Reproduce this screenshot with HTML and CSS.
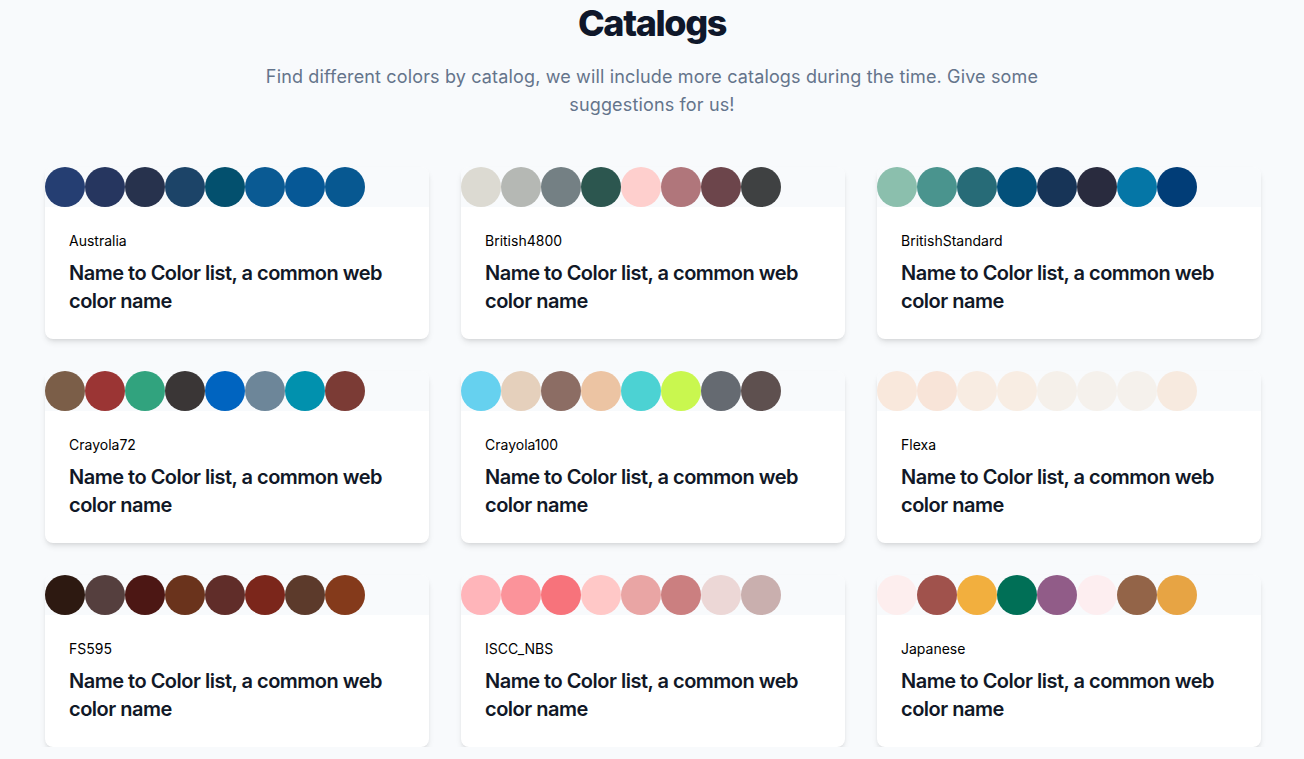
FILE: index.html
```html
<!DOCTYPE html>
<html lang="en">
<head>
<meta charset="utf-8">
<title>Catalogs</title>
<link rel="stylesheet" href="styles.css">
</head>
<body>
<main class="page">
  <header class="intro">
    <h1 class="title">Catalogs</h1>
    <p class="lead">Find different colors by catalog, we will include more catalogs during the time. Give some suggestions for us!</p>
  </header>
  <section class="grid">
    <article class="card">
      <div class="swatches">
        <span class="dot" style="background:#253e72"></span><span class="dot" style="background:#26365f"></span><span class="dot" style="background:#27324d"></span><span class="dot" style="background:#1c4468"></span><span class="dot" style="background:#03506e"></span><span class="dot" style="background:#0a5a93"></span><span class="dot" style="background:#065896"></span><span class="dot" style="background:#075891"></span>
      </div>
      <div class="body"><p class="name">Australia</p><h2 class="desc">Name to Color list, a common web color name</h2></div>
    </article>
    <article class="card">
      <div class="swatches">
        <span class="dot" style="background:#dcdad2"></span><span class="dot" style="background:#b5b8b4"></span><span class="dot" style="background:#748084"></span><span class="dot" style="background:#2c564f"></span><span class="dot" style="background:#fecfcd"></span><span class="dot" style="background:#b0767b"></span><span class="dot" style="background:#6c454b"></span><span class="dot" style="background:#3f4142"></span>
      </div>
      <div class="body"><p class="name">British4800</p><h2 class="desc">Name to Color list, a common web color name</h2></div>
    </article>
    <article class="card">
      <div class="swatches">
        <span class="dot" style="background:#8bbfad"></span><span class="dot" style="background:#4a948e"></span><span class="dot" style="background:#276b77"></span><span class="dot" style="background:#03507a"></span><span class="dot" style="background:#173457"></span><span class="dot" style="background:#292b3e"></span><span class="dot" style="background:#0576a6"></span><span class="dot" style="background:#013d77"></span>
      </div>
      <div class="body"><p class="name">BritishStandard</p><h2 class="desc">Name to Color list, a common web color name</h2></div>
    </article>
    <article class="card">
      <div class="swatches">
        <span class="dot" style="background:#7b5e48"></span><span class="dot" style="background:#9b3534"></span><span class="dot" style="background:#31a37e"></span><span class="dot" style="background:#3a3636"></span><span class="dot" style="background:#0064c0"></span><span class="dot" style="background:#6d8699"></span><span class="dot" style="background:#0191ae"></span><span class="dot" style="background:#7b3b35"></span>
      </div>
      <div class="body"><p class="name">Crayola72</p><h2 class="desc">Name to Color list, a common web color name</h2></div>
    </article>
    <article class="card">
      <div class="swatches">
        <span class="dot" style="background:#66d1ef"></span><span class="dot" style="background:#e5d0bc"></span><span class="dot" style="background:#8c6d64"></span><span class="dot" style="background:#ecc4a3"></span><span class="dot" style="background:#4cd2d3"></span><span class="dot" style="background:#c9f74f"></span><span class="dot" style="background:#656a71"></span><span class="dot" style="background:#5e504f"></span>
      </div>
      <div class="body"><p class="name">Crayola100</p><h2 class="desc">Name to Color list, a common web color name</h2></div>
    </article>
    <article class="card">
      <div class="swatches">
        <span class="dot" style="background:#f9e8dc"></span><span class="dot" style="background:#f8e4d8"></span><span class="dot" style="background:#f8ece2"></span><span class="dot" style="background:#f8ede3"></span><span class="dot" style="background:#f5f0ea"></span><span class="dot" style="background:#f5f1ec"></span><span class="dot" style="background:#f5f1ec"></span><span class="dot" style="background:#f7eadf"></span>
      </div>
      <div class="body"><p class="name">Flexa</p><h2 class="desc">Name to Color list, a common web color name</h2></div>
    </article>
    <article class="card">
      <div class="swatches">
        <span class="dot" style="background:#2d1911"></span><span class="dot" style="background:#553f3e"></span><span class="dot" style="background:#4c1714"></span><span class="dot" style="background:#6a331c"></span><span class="dot" style="background:#602d29"></span><span class="dot" style="background:#7b261b"></span><span class="dot" style="background:#5c3a2b"></span><span class="dot" style="background:#843a1b"></span>
      </div>
      <div class="body"><p class="name">FS595</p><h2 class="desc">Name to Color list, a common web color name</h2></div>
    </article>
    <article class="card">
      <div class="swatches">
        <span class="dot" style="background:#ffb5ba"></span><span class="dot" style="background:#fb939a"></span><span class="dot" style="background:#f7737b"></span><span class="dot" style="background:#ffc8c7"></span><span class="dot" style="background:#e9a5a4"></span><span class="dot" style="background:#cb7f80"></span><span class="dot" style="background:#ecd7d6"></span><span class="dot" style="background:#c9afae"></span>
      </div>
      <div class="body"><p class="name">ISCC_NBS</p><h2 class="desc">Name to Color list, a common web color name</h2></div>
    </article>
    <article class="card">
      <div class="swatches">
        <span class="dot" style="background:#fdeeee"></span><span class="dot" style="background:#a0524c"></span><span class="dot" style="background:#f2af3e"></span><span class="dot" style="background:#006f56"></span><span class="dot" style="background:#915c88"></span><span class="dot" style="background:#fdeef0"></span><span class="dot" style="background:#936448"></span><span class="dot" style="background:#e7a444"></span>
      </div>
      <div class="body"><p class="name">Japanese</p><h2 class="desc">Name to Color list, a common web color name</h2></div>
    </article>
  </section>
</main>
</body>
</html>
```

FILE: styles.css
```css
* { box-sizing: border-box; }
html, body { margin: 0; padding: 0; }
body {
  background: #f8fafc;
  font-family: Inter, "Noto Sans", "Liberation Sans", sans-serif;
  color: #111827;
}
.page {
  width: 1216px;
  margin: 0 auto;
  padding-top: 3px;
}
.intro {
  text-align: center;
}
.title {
  margin: 0;
  font-size: 36px;
  line-height: 40px;
  font-weight: 800;
  color: #0f172a;
  letter-spacing: -1.4px;
}
.lead {
  margin: 20px auto 0;
  max-width: 800px;
  font-size: 18px;
  line-height: 28px;
  color: #64748b;
  letter-spacing: 0.15px;
}
.grid {
  margin-top: 48px;
  display: grid;
  grid-template-columns: repeat(3, 384px);
  gap: 32px;
  padding-left: 1px;
}
.card {
  background: #ffffff;
  border-radius: 8px;
  box-shadow: 0 4px 6px -1px rgba(0,0,0,0.1), 0 2px 4px -2px rgba(0,0,0,0.1);
  overflow: hidden;
}
.swatches {
  display: flex;
  height: 40px;
  background: #f8fafc;
}
.dot {
  width: 40px;
  height: 40px;
  border-radius: 50%;
  flex: none;
}
.body {
  padding: 24px 24px 24px;
}
.name {
  margin: 0;
  font-size: 14px;
  line-height: 20px;
  color: #000000;
}
.desc {
  margin: 8px 0 0;
  font-size: 20px;
  line-height: 28px;
  font-weight: 600;
  color: #111827;
  letter-spacing: -0.5px;
}
```
